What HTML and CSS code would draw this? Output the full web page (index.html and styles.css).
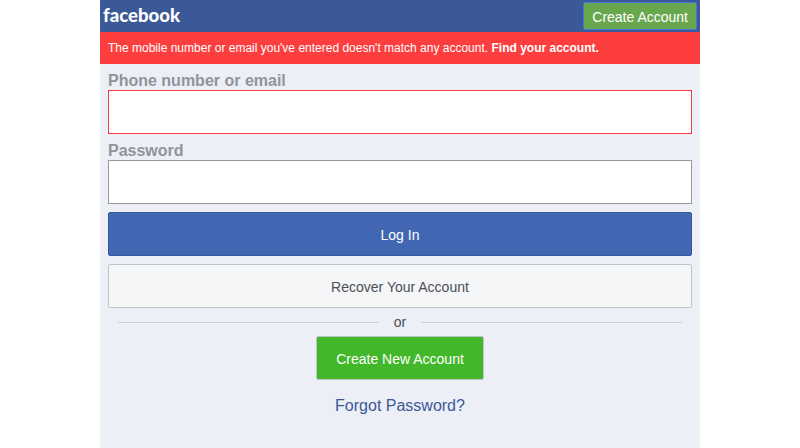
FILE: index.html
```html
<!DOCTYPE html>
<html lang="en">
<head>
<meta charset="utf-8">
<title>Facebook</title>
<link rel="stylesheet" href="styles.css">
</head>
<body>
<main class="page">
  <header class="header">
    <svg class="logo" width="80" height="32" role="img" aria-label="facebook">
      <text x="0" y="22" textLength="77" lengthAdjust="spacingAndGlyphs">facebook</text>
    </svg>
    <a class="header-button">Create Account</a>
  </header>
  <div class="error">The mobile number or email you've entered doesn't match any account. <b>Find your account.</b></div>
  <form class="form">
    <label class="label" for="email">Phone number or email</label>
    <input class="input input-error" id="email" type="text">
    <label class="label label-password" for="pass">Password</label>
    <input class="input" id="pass" type="password">
    <button class="button login" type="button">Log In</button>
    <button class="button recover" type="button">Recover Your Account</button>
    <div class="divider"><span>or</span></div>
    <button class="button create" type="button">Create New Account</button>
    <a class="forgot">Forgot Password?</a>
  </form>
</main>
</body>
</html>
```
FILE: styles.css
```css
* {
  box-sizing: border-box;
}

body {
  margin: 0;
  background: #fff;
  font-family: "Liberation Sans", Arial, sans-serif;
  font-size: 14px;
}

.page {
  width: 600px;
  height: 448px;
  margin: 0 auto;
  background: #eceff6;
}

.header {
  display: flex;
  align-items: center;
  justify-content: space-between;
  height: 32px;
  padding: 0 3px;
  background: #3b5998;
}

.logo {
  display: block;
  overflow: visible;
  fill: #fff;
  font: 900 18.5px Lato, sans-serif;
}

.header-button {
  height: 28px;
  padding: 0 8px;
  border: 1px solid #4475df;
  border-radius: 2px;
  background: #69a74e;
  color: #fff;
  line-height: 28px;
}

.error {
  height: 32px;
  padding: 0 8px;
  background: #fd3e3f;
  color: #fff;
  font-size: 12px;
  line-height: 32px;
}

.form {
  display: flex;
  flex-direction: column;
  padding: 8px 8px 0;
}

.label {
  height: 18px;
  color: #90949c;
  font-size: 16px;
  font-weight: bold;
  line-height: 18px;
}

.label-password {
  margin-top: 8px;
}

.input {
  height: 44px;
  padding: 0 8px;
  border: 1px solid #999;
  border-radius: 0;
  background: #fff;
}

.input-error {
  border-color: #fd3e3f;
}

.button {
  height: 44px;
  margin: 8px 0 0;
  padding: 2px 0 0;
  border: 1px solid;
  border-radius: 2px;
  font: 14px "Liberation Sans", Arial, sans-serif;
}

.login {
  border-color: #365899;
  background: #4267b2;
  color: #fff;
}

.recover {
  border-color: #bec3c9;
  background: #f5f6f7;
  color: #4b4f56;
}

.divider {
  display: flex;
  align-items: center;
  gap: 15px;
  height: 28px;
  padding: 0 10px;
  color: #4b4f56;
}

.divider::before,
.divider::after {
  flex: 1;
  height: 1px;
  background: #ccd0d5;
  content: "";
}

.create {
  align-self: center;
  width: 168px;
  margin: 0;
  border-color: #bec3c9;
  background: #42b72a;
  color: #fff;
}

.forgot {
  margin-top: 17px;
  color: #3b5998;
  font-size: 16px;
  line-height: 18px;
  text-align: center;
}
```
